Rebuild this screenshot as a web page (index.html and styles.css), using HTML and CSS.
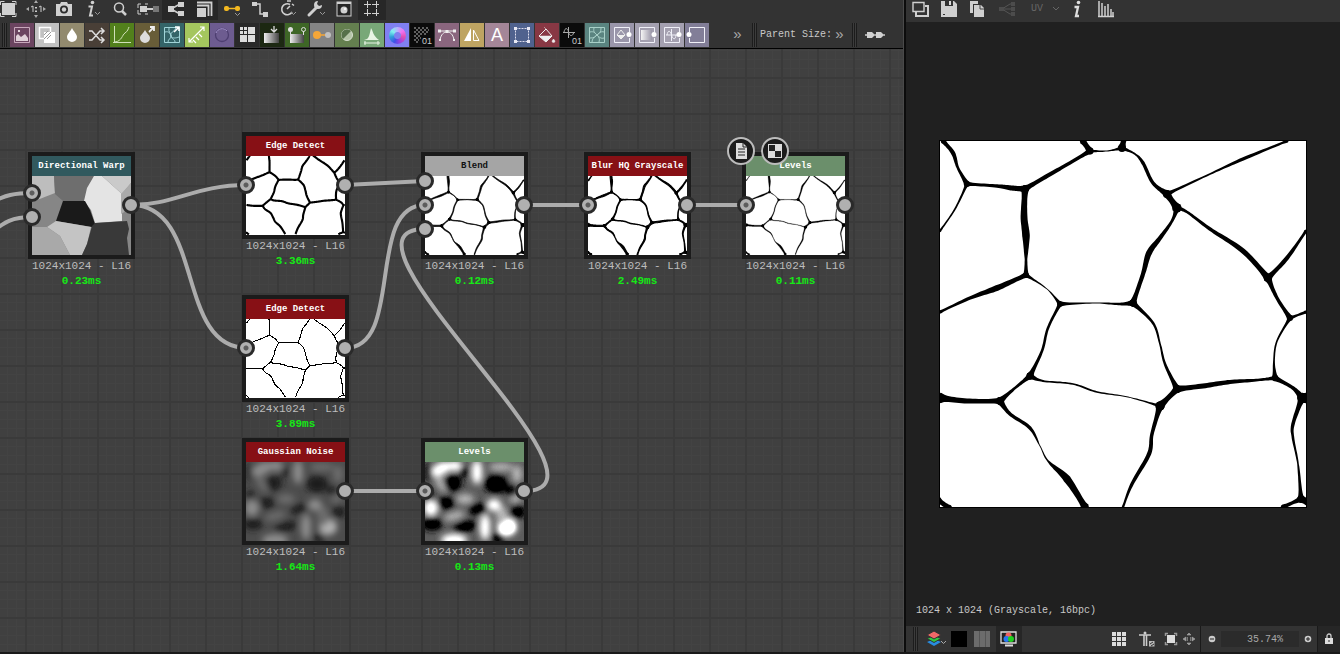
FILE: index.html
```html
<!DOCTYPE html>
<html lang="en">
<head>
<meta charset="utf-8">
<title>Graph editor</title>
<link rel="stylesheet" href="styles.css">
</head>
<body>
<svg class="defs" aria-hidden="true">
  <defs>
    <symbol id="ribbons" viewBox="0 0 366 366" overflow="visible"><g id="ribbon-group"></g></symbol>
    <symbol id="lines" viewBox="0 0 366 366" overflow="visible"><path id="line-path" fill="none"/></symbol>
    <filter id="soft" x="-20%" y="-20%" width="140%" height="140%"><feGaussianBlur stdDeviation="3"/></filter>
    <filter id="contrast" x="0" y="0" width="100%" height="100%" color-interpolation-filters="sRGB">
      <feComponentTransfer>
        <feFuncR type="linear" slope="2.9" intercept="-0.5"/><feFuncG type="linear" slope="2.9" intercept="-0.5"/><feFuncB type="linear" slope="2.9" intercept="-0.5"/>
      </feComponentTransfer>
    </filter>
    <g id="noise">
      <rect width="99" height="79" fill="#4c4c4c"/>
      <g filter="url(#soft)">
        <g fill="#8c8c8c">
          <ellipse cx="16" cy="7" rx="11" ry="6" transform="rotate(-25 16 7)"/><ellipse cx="30" cy="4" rx="7" ry="5"/>
          <ellipse cx="52" cy="10" rx="5" ry="12"/><ellipse cx="6" cy="46" rx="7" ry="8"/>
          <ellipse cx="69" cy="43" rx="7" ry="6"/><ellipse cx="29" cy="78" rx="13" ry="6"/>
          <ellipse cx="60" cy="65" rx="5" ry="13"/>
        </g>
        <ellipse cx="82" cy="65" rx="9" ry="8" fill="#b0b0b0"/>
        <g fill="#6c6c6c">
          <ellipse cx="76" cy="5" rx="12" ry="4"/><ellipse cx="16" cy="22" rx="4" ry="10" transform="rotate(-35 16 22)"/>
          <ellipse cx="40" cy="37" rx="9" ry="5"/><ellipse cx="29" cy="54" rx="11" ry="4" transform="rotate(-15 29 54)"/>
          <ellipse cx="90" cy="36" rx="6" ry="5"/><ellipse cx="92" cy="12" rx="5" ry="9"/>
          <ellipse cx="77" cy="54" rx="6" ry="10"/>
        </g>
        <g fill="#1c1c1c">
          <ellipse cx="28" cy="21" rx="8" ry="8"/><ellipse cx="71" cy="22" rx="11" ry="9"/>
          <ellipse cx="21" cy="41" rx="8" ry="6"/><ellipse cx="53" cy="47" rx="9" ry="5" transform="rotate(-15 53 47)"/>
          <ellipse cx="7" cy="62" rx="10" ry="6"/><ellipse cx="93" cy="50" rx="7" ry="6"/><ellipse cx="40" cy="65" rx="12" ry="5" transform="rotate(-15 40 65)"/>
          <ellipse cx="73" cy="76" rx="6" ry="5"/><ellipse cx="4" cy="33" rx="4" ry="5"/><ellipse cx="86" cy="29" rx="5" ry="5"/>
          <ellipse cx="39" cy="10" rx="4" ry="5"/><ellipse cx="3" cy="10" rx="3" ry="9"/>
        </g>
      </g>
    </g>
  </defs>
</svg>

<main class="app">
  <section class="editor">
    <div class="toolbar main-tools">
      <button class="tool" aria-label="Fit view"><svg viewBox="0 0 28 20"><rect x="8" y="3" width="13" height="12" fill="#d0d0d0"/><path d="M6.500 5V1.500h4M18 1.500h4V5M22 13v3.500h-4M10.500 16.500h-4V13" fill="none" stroke="#d0d0d0"/></svg></button>
      <button class="tool" aria-label="Actual size"><svg viewBox="0 0 28 20"><path d="M4 9l3-2v4zM24 9l-3-2v4zM14 0l2 3h-4zM14 18l2-3h-4z" fill="#aaa"/><path d="M9 7l2-1v6M19 12V6l-2 1" fill="none" stroke="#ccc"/><path d="M13 7h2v1.500h-2zM13 10.500h2V12h-2z" fill="#ccc"/></svg></button>
      <button class="tool" aria-label="Screenshot"><svg viewBox="0 0 28 20"><path d="M6 4h4l1-2h6l1 2h4v12H6z" fill="#d0d0d0"/><circle cx="14" cy="9.500" r="4" fill="#2b2b2b"/><circle cx="14" cy="9.500" r="2.200" fill="#d0d0d0"/></svg></button>
      <button class="tool" aria-label="Information"><svg viewBox="0 0 28 20"><circle cx="14.500" cy="2.500" r="1.800" fill="#d0d0d0"/><path d="M10.500 6.500h3.500l-2 9h3" fill="none" stroke="#d0d0d0" stroke-width="2"/><path d="M17 12l2.500 2.500L22 12" fill="none" stroke="#999"/></svg></button>
      <button class="tool" aria-label="Search"><svg viewBox="0 0 28 20"><circle cx="13" cy="7.500" r="4.500" fill="none" stroke="#d0d0d0" stroke-width="1.500"/><path d="M16 11l4 4" stroke="#d0d0d0" stroke-width="2.500"/></svg></button>
      <button class="tool" aria-label="Align nodes"><svg viewBox="0 0 28 20"><path d="M4 8V4h3M4 10v4h3M14 4h-3M14 14h-3" fill="none" stroke="#ccc"/><rect x="6" y="6" width="7" height="6" fill="#d0d0d0"/><path d="M13 9h7" stroke="#d0d0d0" stroke-width="2"/><rect x="19" y="6" width="6" height="6" fill="#777"/></svg></button>
      <button class="tool pressed" aria-label="Link mode"><svg viewBox="0 0 28 20"><path d="M9 9l9-5M9 9l9 5" stroke="#d0d0d0" stroke-width="1.500"/><path d="M6 6h6v6H6zM16 2h6v5h-6zM16 11h6v5h-6z" fill="#d0d0d0"/></svg></button>
      <button class="tool pressed" aria-label="Stacking"><svg viewBox="0 0 28 20"><path d="M7 8h9v9H7z" fill="#d0d0d0"/><path d="M7 5.500h11.500V16M7 2.500h14.500V16" fill="none" stroke="#d0d0d0" stroke-width="1.800"/></svg></button>
      <button class="tool" aria-label="Highlight links"><svg viewBox="0 0 28 20"><path d="M8 8.500h12" stroke="#f4b920" stroke-width="1.500"/><rect x="6" y="6" width="5" height="5" rx="2" fill="#f4b920"/><rect x="17" y="6" width="5" height="5" rx="2" fill="#f4b920"/><path d="M17 13l2.500 2.500L22 13" fill="none" stroke="#999"/></svg></button>
      <button class="tool" aria-label="Connector style"><svg viewBox="0 0 28 20"><path d="M8 4h6v10h6" fill="none" stroke="#d0d0d0" stroke-width="1.500"/><path d="M6 2h5v4H6zM17 12h5v5h-5z" fill="#d0d0d0"/></svg></button>
      <button class="tool" aria-label="Timing"><svg viewBox="0 0 28 20"><path d="M16 4.500a5.500 5.500 0 1 0 2 7.500" fill="none" stroke="#d0d0d0" stroke-width="1.600"/><path d="M13 1h4M13 9l3-3M18 4l2 1.500" fill="none" stroke="#d0d0d0" stroke-width="1.500"/><path d="M17 12l2.500 2.500L22 12" fill="none" stroke="#999"/></svg></button>
      <button class="tool" aria-label="Tools"><svg viewBox="0 0 28 20"><path d="M7 15l8-8" stroke="#d0d0d0" stroke-width="3" stroke-linecap="round"/><path d="M20 5a4 4 0 1 1-4-4l-1 3 2 2z" fill="#d0d0d0"/><path d="M18 12l2.500 2.500L23 12" fill="none" stroke="#999"/></svg></button>
      <button class="tool" aria-label="Preview"><svg viewBox="0 0 28 20"><rect x="7" y="2" width="14" height="14" fill="#262626" stroke="#d0d0d0"/><path d="M7 3h14" stroke="#d0d0d0" stroke-width="2"/><circle cx="14" cy="10" r="3.500" fill="#d0d0d0"/><circle cx="15" cy="9" r="1" fill="#fff"/></svg></button>
      <button class="tool pressed" aria-label="Snap to grid"><svg viewBox="0 0 28 20"><path d="M9.500 1v16M18.500 1v16M6 4.500h16M6 13.500h16" stroke="#d0d0d0" stroke-dasharray="7 1"/></svg></button>
    </div>

    <div class="toolbar node-tools">
      <span class="grip"></span>
      <div class="palette">
        <button class="swatch c0" aria-label="Bitmap"><svg viewBox="0 0 24 24"><path d="M4.500 4.500h15v15h-15z" fill="none" stroke="#c8a8bc"/><path d="M6 18v-5l2-2 3 3 4-3 3 4v3zM8 7h2v2H8z" fill="#e0d0d8"/></svg></button>
        <button class="swatch c1" aria-label="Blend"><svg viewBox="0 0 24 24"><path d="M4.500 4.500h11v11h-11z" fill="none" stroke="#fff" stroke-width="1.500"/><path d="M9 9h11v11H9z" fill="#fff"/><path d="M9 12l4-4M9 16l7-7M12 16l4-4" stroke="#999"/></svg></button>
        <button class="swatch c2" aria-label="Blur"><svg viewBox="0 0 24 24"><path d="M12 5c2 4 5 6 5 9a5 5 0 0 1-10 0c0-3 3-5 5-9z" fill="#fff"/></svg></button>
        <button class="swatch c3" aria-label="Channel shuffle"><svg viewBox="0 0 24 24"><path d="M4 8h3l8 9h3M4 17h3l8-9h3M16 5l3 3-3 3M16 14l3 3-3 3" fill="none" stroke="#ddd" stroke-width="1.500"/></svg></button>
        <button class="swatch c4" aria-label="Curve"><svg viewBox="0 0 24 24"><path d="M4.500 3v17M3 19.500h18M5 19c7-1 7-7 10-9s3-4 4-6" fill="none" stroke="#d0e0b8"/></svg></button>
        <button class="swatch c5" aria-label="Directional blur"><svg viewBox="0 0 24 24"><path d="M10 7c2 4 5 5 5 8a5 5 0 0 1-10 0c0-3 3-4 5-8z" fill="#ddd"/><path d="M14 9l5-5M15 4h4v4" fill="none" stroke="#eee" stroke-width="1.800"/></svg></button>
        <button class="swatch c6" aria-label="Directional warp"><svg viewBox="0 0 24 24"><path d="M4.500 4.500h15v15h-15zM5 9c4-1 5 1 6 4s5 2 8 1M9 5c-1 4 2 5 2 8s-3 3-3 6M16 5c-2 4-6 4-5 8s4 3 4 6" fill="none" stroke="#a0d4d8"/><path d="M14 9l5-5M15 4h4v4" fill="none" stroke="#fff" stroke-width="1.600"/></svg></button>
        <button class="swatch c7" aria-label="Distance"><svg viewBox="0 0 24 24"><path d="M4 19L19 4M15 4h4v4M4 15v4h4M11 14l3 3M14 11l3 3M8 17l3 3" fill="none" stroke="#fff" stroke-width="1.200"/></svg></button>
        <button class="swatch c8" aria-label="Emboss"><svg viewBox="0 0 24 24"><circle cx="12" cy="12" r="6.500" fill="none" stroke="#4d3e70" stroke-width="1.300"/><path d="M6 10a6.500 6.500 0 0 1 11-2" fill="none" stroke="#a898d0"/></svg></button>
        <button class="swatch c9" aria-label="FX map"><svg viewBox="0 0 24 24"><path d="M5 4h3v3H5zM9 4h3v3H9zM5 8h3v3H5zM9 8h3v3H9zM13 4h7v7h-7zM5 12h7v7H5zM13 12h7v7h-7z" fill="#ddd"/></svg></button>
        <button class="swatch c10" aria-label="Gradient"><svg viewBox="0 0 24 24"><linearGradient id="g1"><stop stop-color="#eee"/><stop offset="1" stop-color="#444"/></linearGradient><path d="M4 10h15v10H4z" fill="url(#g1)"/><path d="M14 3v5M11 6l3 3 3-3" fill="none" stroke="#ddd" stroke-width="1.300"/></svg></button>
        <button class="swatch c11" aria-label="Gradient map"><svg viewBox="0 0 24 24"><path d="M5 11h14v9H5z" fill="url(#g1)"/><path d="M5.500 8v6M18.500 8v4" stroke="#ddd"/><circle cx="5.500" cy="6.500" r="2.500" fill="#ddd"/><circle cx="18.500" cy="6.500" r="2" fill="none" stroke="#ddd"/></svg></button>
        <button class="swatch c12" aria-label="Grayscale conversion"><svg viewBox="0 0 24 24"><path d="M7 12h11" stroke="#f4a638" stroke-width="1.500"/><circle cx="7" cy="12" r="4" fill="#f4a638"/><circle cx="18" cy="12" r="3" fill="#c0c0c0"/></svg></button>
        <button class="swatch c13" aria-label="HSL"><svg viewBox="0 0 24 24"><circle cx="12" cy="12" r="5.500" fill="#b4c4a8" stroke="#d8e0d0"/><path d="M8 16L16 8a5.500 5.500 0 0 0-8 8z" fill="#56704a"/></svg></button>
        <button class="swatch c14" aria-label="Levels"><svg viewBox="0 0 24 24"><path d="M4 17c5-1 5-3 7-12 2 3 2 8 8 12z" fill="#e8f4e4"/><path d="M4 20h16M5 18v4M18 18v4" stroke="#e8f4e4"/></svg></button>
        <button class="swatch c15" aria-label="Normal"><span class="wheel"></span></button>
        <button class="swatch c16" aria-label="Pixel processor"><svg viewBox="0 0 24 24"><path d="M4 5h15M4 9h15M4 13h7M4 17h5" stroke="#606060" stroke-width="2" stroke-dasharray="2 2"/><path d="M6 7h13M6 11h11M6 15h5M6 19h3" stroke="#606060" stroke-width="2" stroke-dasharray="2 2"/></svg><span class="digits">01</span></button>
        <button class="swatch c17" aria-label="SVG"><svg viewBox="0 0 24 24"><path d="M5 8h14M5 17c1-6 4-8 7-8s6 2 7 8" fill="none" stroke="#eee"/><path d="M3 6.500h3v3H3zM18 6.500h3v3h-3zM10.500 7h3v3h-3zM4 16h2v2H4zM18 16h2v2h-2z" fill="#eee"/></svg></button>
        <button class="swatch c18" aria-label="Mirror"><svg viewBox="0 0 24 24"><path d="M11 5v13H4z" fill="#fff"/><path d="M13.500 7v10.500H19z" fill="none" stroke="#fff"/></svg></button>
        <button class="swatch c19 letter" aria-label="Text">A</button>
        <button class="swatch c20" aria-label="Transformation"><svg viewBox="0 0 24 24"><path d="M5.500 5.500h13v13h-13z" fill="none" stroke="#dde" stroke-dasharray="2 1"/><path d="M4 4h3v3H4zM17 4h3v3h-3zM4 17h3v3H4zM17 17h3v3h-3z" fill="#e8e8f4"/></svg></button>
        <button class="swatch c21" aria-label="Uniform color"><svg viewBox="0 0 24 24"><path d="M4 13l7-7 6 7-6 6z" fill="none" stroke="#eee"/><path d="M9 4l3 3M4 13h13l-6 6zM18.500 16l1.500 2a1.500 1.500 0 1 1-3 0z" fill="#eee" stroke="#eee" stroke-width=".5"/></svg></button>
        <button class="swatch c22" aria-label="Value processor"><svg viewBox="0 0 24 24"><path d="M3 9.500h12M8.500 4v11M4 9c1-5 4-4 4.500 0s4 5 5 1" fill="none" stroke="#aaa"/></svg><span class="digits">01</span></button>
        <button class="swatch c23" aria-label="Warp"><svg viewBox="0 0 24 24"><path d="M4.500 4.500h15v15h-15zM5 9c4-1 5 1 7 3s4 4 7 3M9 5c-1 4 1 5 3 7s3 4 2 7M16 5c0 4-1 5-4 7s-5 4-5 7M5 15c4 0 5-1 7-3s4-4 7-3" fill="none" stroke="#a8d0c8"/></svg></button>
        <button class="swatch c24" aria-label="Input color"><svg viewBox="0 0 24 24"><path d="M19.500 9V4.500h-15v15h15V15" fill="none" stroke="#f0f0f8"/><path d="M7 12l4-5 4 5-4 4z" fill="none" stroke="#eee"/><path d="M7 12h8l-4 4z" fill="#eee"/><circle cx="19" cy="11.500" r="2.500" fill="#fff"/></svg></button>
        <button class="swatch c25" aria-label="Input grayscale"><svg viewBox="0 0 24 24"><linearGradient id="g2"><stop stop-color="#f4f4f4"/><stop offset="1" stop-color="#9a96a8"/></linearGradient><path d="M6 7h11v10H6z" fill="url(#g2)"/><path d="M19.500 9V4.500h-15v15h15V15" fill="none" stroke="#f0f0f8"/><circle cx="19" cy="11.500" r="2.500" fill="#fff"/></svg></button>
        <button class="swatch c26" aria-label="Input value"><svg viewBox="0 0 24 24"><path d="M19.500 9V4.500h-15v15h15V15M6 12h11M11.500 6v12M7 12c1-5 3-5 4.500 0s4 5 4.500 0" fill="none" stroke="#f0f0f8"/><circle cx="19" cy="11.500" r="2.500" fill="#fff"/></svg></button>
        <button class="swatch c27" aria-label="Output"><svg viewBox="0 0 24 24"><path d="M4.500 9V4.500h15v15h-15V15" fill="none" stroke="#f0f0f8"/><circle cx="4" cy="11.500" r="2.500" fill="#fff"/></svg></button>
      </div>
      <button class="more more-nodes" aria-label="More nodes">»</button>
      <span class="grip"></span>
      <span class="size-label">Parent Size:</span>
      <button class="more" aria-label="More sizes">»</button>
      <span class="grip grip-link"></span>
      <button class="link-tool" aria-label="Link sizes"><svg viewBox="0 0 20 12"><path d="M0 6h20" stroke="#d0d0d0" stroke-width="1.500"/><path d="M2 3h5l2 2v2L7 9H2zM11 3h5l2 2v2l-2 2h-5z" fill="#d0d0d0"/></svg></button>
    </div>

    <div class="canvas">
      <svg class="wires" aria-hidden="true">
        <path d="M-10 154C5 146 15 144 32 144M-10 184C5 173 12 168 32 168M131 156C175 156 195 136 247 136M131 156C205 156 175 299 247 299M345 136L425 132M345 299C405 299 365 156 425 156M524 442C634 442 315 180 425 180M524 156H588M687 156H747M345 442H425"/>
      </svg>

      <article class="node n-warp"><div class="frame"><h2 class="teal">Directional Warp</h2>
        <svg class="thumb" viewBox="0 0 99 79"><rect width="99" height="79" fill="#868686"/><path fill="#bdbdbd" d="M0 0h22l1 17-23 9z"/><path fill="#6e6e6e" d="M22 0h40L52 25H31l-8-7z"/><path fill="#e4e4e4" d="M62 0h8l10 9 10 9v27l-27 2-4-13-7-9 3-13z"/><path fill="#cacaca" d="M70 0h29v7l-9 11z"/><path fill="#aaa" d="M99 7v25l-10 6V18z"/><path fill="#1a1a1a" d="M31 25h22l5 9 5 14-3 3-36-6z"/><path fill="#c4c4c4" d="M24 45l35 6-4 17-5 11H38L28 60l-13-9z"/><path fill="#a9a9a9" d="M0 51h15l13 9 10 19H0z"/><path fill="#393939" d="M60 50l3-3 32-2 2 8-2 9 2 17H50l5-11z"/></svg></div>
        <i class="port in source up"></i><i class="port in down"></i><i class="port out"></i><p>1024x1024 - L16</p><strong>0.23ms</strong></article>

      <article class="node n-edge-a"><div class="frame"><h2 class="red">Edge Detect</h2>
        <svg class="thumb bold-lines" viewBox="0 74 366 295"><use href="#lines" width="366" height="366"/></svg></div>
        <i class="port in source"></i><i class="port out"></i><p>1024x1024 - L16</p><strong>3.36ms</strong></article>

      <article class="node n-edge-b"><div class="frame"><h2 class="red">Edge Detect</h2>
        <svg class="thumb fine-lines" viewBox="0 74 366 295"><use href="#lines" width="366" height="366"/></svg></div>
        <i class="port in source"></i><i class="port out"></i><p>1024x1024 - L16</p><strong>3.89ms</strong></article>

      <article class="node n-blend"><div class="frame"><h2 class="gray">Blend</h2>
        <svg class="thumb blend-lines" viewBox="0 74 366 295"><use href="#ribbons" width="366" height="366"/></svg></div>
        <i class="port in high"></i><i class="port in source"></i><i class="port in low"></i><i class="port out"></i><p>1024x1024 - L16</p><strong>0.12ms</strong></article>

      <article class="node n-blur"><div class="frame"><h2 class="red">Blur HQ Grayscale</h2>
        <svg class="thumb blur-lines" viewBox="0 74 366 295"><use href="#ribbons" width="366" height="366"/></svg></div>
        <i class="port in source"></i><i class="port out"></i><p>1024x1024 - L16</p><strong>2.49ms</strong></article>

      <article class="node n-levels"><div class="frame"><h2 class="green">Levels</h2>
        <svg class="thumb level-lines" viewBox="0 74 366 295"><use href="#ribbons" width="366" height="366"/></svg></div>
        <i class="port in source"></i><i class="port out"></i>
        <span class="badge"><svg viewBox="0 0 28 28"><path d="M9 6h7l4 4v12H9z" fill="#ddd"/><path d="M16 6v4h4M11 12h7M11 15h7M11 18h7" fill="none" stroke="#222"/></svg></span>
        <span class="badge second"><svg viewBox="0 0 28 28"><path d="M7 7h14v14H7z" fill="#ddd"/><path d="M8 8h6v6H8zM14 14h6v6h-6z" fill="#222"/></svg></span>
        <p>1024x1024 - L16</p><strong>0.11ms</strong></article>

      <article class="node n-noise"><div class="frame"><h2 class="red">Gaussian Noise</h2>
        <svg class="thumb" viewBox="0 0 99 79"><use href="#noise"/></svg></div>
        <i class="port out"></i><p>1024x1024 - L16</p><strong>1.64ms</strong></article>

      <article class="node n-noise-levels"><div class="frame"><h2 class="green">Levels</h2>
        <svg class="thumb" viewBox="0 0 99 79"><g filter="url(#contrast)"><use href="#noise"/></g></svg></div>
        <i class="port in source"></i><i class="port out"></i><p>1024x1024 - L16</p><strong>0.13ms</strong></article>
    </div>
  </section>

  <section class="viewer">
    <div class="toolbar view-tools">
      <button class="tool" aria-label="Duplicate view"><svg viewBox="0 0 28 22"><path d="M7 2.500h11v9H7z" fill="none" stroke="#d0d0d0" stroke-width="1.400"/><path d="M10 12v4h12V6h-3" fill="none" stroke="#d0d0d0" stroke-width="2"/></svg></button>
      <button class="tool" aria-label="Save"><svg viewBox="0 0 28 22"><path d="M6 1h13l3 3v13H6z" fill="#d0d0d0"/><path d="M10 1h8v5h-8z" fill="#333"/><path d="M14 1h2v4h-2z" fill="#ddd"/><path d="M8 14.500h2" stroke="#333"/></svg></button>
      <button class="tool" aria-label="Copy"><svg viewBox="0 0 28 22"><path d="M6 1h8v3H9v9H6z" fill="#d0d0d0"/><path d="M10 5h7l3 3v9H10z" fill="#d0d0d0"/><path d="M16 5v4h4" stroke="#444" fill="none"/></svg></button>
      <button class="tool dim" aria-label="Share"><svg viewBox="0 0 28 22"><path d="M9 9h12M9 9l8-5h4M9 9l8 5h4" fill="none" stroke="#555"/><path d="M6 7h5v4H6zM18 2h4v4h-4zM18 7h4v4h-4zM18 12h4v4h-4z" fill="#4c4c4c"/></svg></button>
      <button class="uv">UV<svg viewBox="0 0 8 6"><path d="M1 1l3 3 3-3" fill="none" stroke="#666"/></svg></button>
      <button class="info" aria-label="Image information"><svg viewBox="0 0 16 22"><circle cx="9.500" cy="2.500" r="1.800" fill="#ddd"/><path d="M5.500 7h3.500l-2 9h3" fill="none" stroke="#ddd" stroke-width="2.300"/></svg></button>
      <button class="tool" aria-label="Histogram"><svg viewBox="0 0 28 22"><path d="M6 16.500h16M7 1v15M10 3v13M13 6v10M16 4v12M19 9v7M21 12v4" stroke="#d0d0d0" stroke-width="1.500"/></svg></button>
    </div>
    <div class="viewport">
      <svg class="preview" viewBox="0 0 366 366" role="img" aria-label="Cell pattern preview"><use href="#ribbons" width="366" height="366"/></svg>
      <p class="caption">1024 x 1024 (Grayscale, 16bpc)</p>
    </div>
    <div class="toolbar status">
      <span class="grip"></span>
      <button class="layers" aria-label="Channels"><svg viewBox="0 0 22 20"><path d="M2 13l7 4 7-4-7-3z" fill="#288ce0"/><path d="M2 9.500l7 4 7-4-7-3z" fill="#30c840" stroke="#333"/><path d="M2 6l7 4 7-4-7-4z" fill="#f06868" stroke="#333"/><path d="M16 12l2.500 2.500L21 12" fill="none" stroke="#aaa"/></svg></button>
      <button class="chip black" aria-label="Black background"></button>
      <button class="chip bars" aria-label="Channel bars"></button>
      <button class="monitor" aria-label="Color display"><svg viewBox="0 0 26 26"><path d="M5 6h15v11H5z" fill="#222" stroke="#ddd" stroke-width="1.300"/><path d="M9 19.500h8" stroke="#ddd" stroke-width="2"/><circle cx="12.500" cy="9.500" r="3" fill="#f06060"/><circle cx="10.500" cy="13" r="3" fill="#2878f0"/><circle cx="15" cy="13" r="3" fill="#20d020"/></svg></button>
      <span class="spacer"></span>
      <button class="mini" aria-label="Tiling"><svg viewBox="0 0 16 16"><path d="M1 1h4v4H1zM6 1h4v4H6zM11 1h4v4h-4zM1 6h4v4H1zM6 6h4v4H6zM11 6h4v4h-4zM1 11h4v4H1zM6 11h4v4H6zM11 11h4v4h-4z" fill="#ddd"/></svg></button>
      <button class="mini figure" aria-label="Physical size"><svg viewBox="0 0 16 16"><circle cx="6" cy="2" r="1.500" fill="#ccc"/><path d="M0 4h12M5 4v11M7.500 4v11" stroke="#ccc" stroke-width="1.600"/><path d="M10 10h5.500v5.500H10z" fill="#bbb"/><path d="M11 13l3-2M12 15l3-2" stroke="#333"/></svg></button>
      <button class="mini fit" aria-label="Fit image"><svg viewBox="0 0 16 16"><path d="M4 4h8v8H4z" fill="#ddd"/><path d="M2.500 5V2.500H5M11 2.500h2.500V5M13.500 11v2.500H11M5 13.500H2.500V11" fill="none" stroke="#999" stroke-width="1.500"/></svg></button>
      <button class="mini one" aria-label="Zoom to actual size"><svg viewBox="0 0 16 16"><path d="M2 8l3-2v4zM14 8l-3-2v4zM8 2l2 2H6zM8 14l2-2H6zM6.500 6v4M9.500 6v4" fill="#999" stroke="#aaa" stroke-width=".6"/></svg></button>
      <span class="rule"></span>
      <button class="round" aria-label="Zoom out"><svg viewBox="0 0 8 8"><circle cx="4" cy="4" r="3.300" fill="#ccc"/><path d="M2 4h4" stroke="#222"/></svg></button>
      <input class="zoom" aria-label="Zoom level" value="35.74%">
      <button class="round" aria-label="Zoom in"><svg viewBox="0 0 8 8"><circle cx="4" cy="4" r="3.300" fill="#ccc"/><path d="M2 4h4M4 2v4" stroke="#222"/></svg></button>
      <span class="rule"></span>
      <button class="lock" aria-label="Lock zoom"><svg viewBox="0 0 10 12"><path d="M3 6V3a2 2 0 0 1 4 0v3" fill="none" stroke="#ccc" stroke-width="1.300"/><path d="M1 5h8v6H1z" fill="#ddd"/><path d="M5 7v2" stroke="#333"/></svg></button>
    </div>
  </section>
</main>
<script src="cells.js"></script>
</body>
</html>
```

FILE: styles.css
```css
* { box-sizing: border-box; }
body { margin: 0; background: #333; color: #c8c8c8; font: 10px/14px "Liberation Mono", monospace; overflow: hidden; }
button { padding: 0; border: 0; background: none; color: inherit; font: inherit; display: block; flex: none; }
svg { display: block; }
p, h2 { margin: 0; }
.defs { position: absolute; width: 0; height: 0; }

.app { display: flex; height: 100vh; border-bottom: 2px solid #1a1a1a; }
.editor { flex: 1; min-width: 0; display: flex; flex-direction: column; border-right: 1px solid #4a4a4a; }
.viewer { flex: none; width: 436px; display: flex; flex-direction: column; border-left: 2px solid #0c0c0c; }
.toolbar { display: flex; align-items: center; background: #333; flex: none; }
.tool { width: 28px; height: 20px; }
.tool svg { width: 28px; height: 20px; }
.pressed { background: #272727; }
.grip { flex: none; width: 5px; height: 24px; background: repeating-linear-gradient(90deg, #1c1c1c 0 1px, #3c3c3c 1px 2px); }

.main-tools { margin-left: -6px; height: 21px; align-items: flex-start; }
.node-tools { height: 28px; padding: 2px 0 1px 2px; border-bottom: 1px solid #000; }
.palette { display: flex; gap: 1px; margin-left: 3px; }
.swatch { position: relative; width: 24px; height: 24px; overflow: hidden; }
.swatch svg { width: 24px; height: 24px; }
.digits { position: absolute; right: 2px; bottom: 1px; font: 9px/10px "Liberation Sans", sans-serif; color: #ccc; }
.letter { font: 18px/24px "Liberation Sans", sans-serif; color: #fff; text-align: center; }
.wheel { display: block; width: 17px; height: 17px; margin: 0 auto; border-radius: 50%; background: radial-gradient(circle, #8080f0 0 3px, transparent 4px), conic-gradient(#b8b0ff, #f070f0, #e050b0, #a040e0, #4050e8, #30a0d8, #80f0f0, #b8b0ff); }
.c0 { background: #6b4460; } .c1 { background: #c2c2c2; } .c2 { background: #928a6e; } .c3 { background: #493f37; }
.c4 { background: #52801c; } .c5 { background: #685d38; } .c6 { background: #346468; } .c7 { background: #a4c65e; }
.c8 { background: #6d5c90; } .c9 { background: #292929; } .c10 { background: #1c2812; } .c11 { background: #3e6626; }
.c12 { background: #848484; } .c13 { background: #647f4f; } .c14 { background: #78a878; } .c15 { background: #8080f2; }
.c16, .c22 { background: #0b0b0b; } .c17 { background: #8a667e; } .c18 { background: #bea462; } .c19 { background: #a48698; }
.c20 { background: #50628e; } .c21 { background: #883844; } .c23 { background: #5a8480; } .c24 { background: #9a96aa; }
.c25, .c26 { background: #a4a0b0; } .c27 { background: #827e98; }
.more { font: 15px/22px "Liberation Sans", sans-serif; color: #aaa; width: 9px; padding-bottom: 2px; }
.more-nodes { margin: 0 10px 0 24px; }
.size-label { margin: 0 3px; white-space: nowrap; }
.grip-link { margin-left: 8px; }
.link-tool { margin-left: 8px; }
.link-tool svg { width: 20px; height: 12px; }

.canvas {
  flex: 1; position: relative; overflow: hidden; background-color: #404040;
  background-image: linear-gradient(90deg, #3a3a3a 2px, transparent 2px), linear-gradient(#3a3a3a 2px, transparent 2px), linear-gradient(90deg, #434343 1px, transparent 1px), linear-gradient(#434343 1px, transparent 1px);
  background-size: 36px 36px, 36px 36px, 9px 9px, 9px 9px;
  background-position: 25px 28px, 25px 28px, 25px 28px, 25px 28px;
}
.wires { position: absolute; inset: 0; width: 100%; height: 100%; fill: none; stroke: #acacac; stroke-width: 4; }
.node { position: absolute; width: 107px; text-align: center; font-size: 11px; line-height: 15px; white-space: nowrap; }
.frame { border: 4px solid #1b1b1b; }
.frame h2 { height: 20px; font-size: 9px; line-height: 20px; color: #fff; }
.frame .gray { background: #a5a5a5; color: #111; }
.red { background: #871015; }
.teal { background: #31595e; }
.green { background: #6b8f6b; }
.node p { color: #bdbdbd; }
.node strong { display: block; color: #16e816; }
.thumb { width: 99px; height: 79px; background: #fff; overflow: hidden; }
.bold-lines { stroke: #000; stroke-width: 8; }
.fine-lines { stroke: #000; stroke-width: 4; shape-rendering: crispEdges; }
.blend-lines { stroke: #000; stroke-width: 3; }
.blur-lines use { stroke: #000; stroke-width: 4; filter: blur(2px); }
.level-lines { stroke: #000; stroke-width: 1; }
.port { position: absolute; top: 44px; width: 18px; height: 18px; border: 3px solid #2a2a2a; border-radius: 50%; background: #b0b0b0; }
.in { left: -5px; }
.out { right: -5px; }
.source { background: radial-gradient(circle, #5c5c5c 0 2px, #b0b0b0 3px); }
.up { top: 32px; }
.down { top: 56px; }
.high { top: 20px; }
.low { top: 68px; }
.badge { position: absolute; left: -15px; top: -15px; width: 28px; height: 28px; border: 2px solid #bcbcbc; border-radius: 50%; background: #1c1c1c; }
.badge svg { width: 28px; height: 28px; margin: -2px; }
.second { left: 19px; }
.n-warp { left: 28px; top: 103px; }
.n-edge-a { left: 242px; top: 83px; }
.n-edge-b { left: 242px; top: 246px; }
.n-blend { left: 421px; top: 103px; }
.n-blur { left: 584px; top: 103px; }
.n-levels { left: 742px; top: 103px; }
.n-noise { left: 242px; top: 389px; }
.n-noise-levels { left: 421px; top: 389px; }

.view-tools { height: 22px; gap: 1px; align-items: flex-start; }
.view-tools .tool { height: 22px; }
.view-tools .tool svg { width: 28px; height: 22px; }
.uv { display: flex; align-items: center; gap: 9px; height: 18px; margin-left: 9px; color: #666; }
.uv svg { width: 8px; height: 6px; }
.info { margin: 0 6px 0 8px; }
.info svg { width: 16px; height: 22px; }
.viewport { flex: 1; display: grid; grid-template: minmax(0, 1fr) / minmax(0, 1fr); background: #202020; }
.viewport > * { grid-area: 1 / 1; }
.preview { place-self: center; width: 85%; max-width: 368px; aspect-ratio: 1; border: 1px solid #000; background: #fff; overflow: hidden; }
.caption { align-self: end; padding: 0 10px 8px; }
.status { height: 26px; padding-left: 7px; }
.layers { margin-left: 7px; }
.layers svg { width: 22px; height: 20px; }
.chip { width: 16px; height: 16px; }
.black { background: #000; margin-left: 4px; }
.bars { margin-left: 7px; background: repeating-linear-gradient(90deg, #6c6c6c 0 5px, #555 5px 6px); }
.monitor { margin-left: 6px; background: #262626; }
.monitor svg { width: 26px; height: 26px; }
.spacer { flex: 1; }
.mini svg { width: 16px; height: 16px; }
.figure { margin-left: 12px; }
.fit { margin-left: 8px; }
.one { margin-left: 2px; }
.rule { width: 1px; height: 26px; background: #1a1a1a; margin-left: 3px; }
.round { margin: 0 5px 0 7px; }
.round svg { width: 8px; height: 8px; }
.zoom + .round { margin: 0 2px 0 5px; }
.zoom { width: 78px; height: 16px; margin: 0; padding: 0 0 0 10px; border: 0; background: #2b2b2b; color: #a8a8a8; font: inherit; text-align: center; }
.lock { width: 22px; height: 26px; background: #262626; display: grid; place-items: center; }
.lock svg { width: 10px; height: 12px; }
```

FILE: cells.js
```javascript
// Cell borders as polylines of [x, y, thickness] on a 366-unit square.
const edges = [
  [[3,0,6],[13,12,5],[18,27,3],[27,43,8]],
  [[27,43,5],[15,68,2],[0,90,3]],
  [[27,43,6],[57,45,4],[72,47,6],[85,48,9]],
  [[85,48,9],[107,35,5],[128,23,4],[150,10,8]],
  [[143,0,8],[150,10,9]],
  [[150,10,5],[167,10,1],[182,7,6]],
  [[184,-2,6],[182,7,10]],
  [[182,7,6],[195,13,2],[203,22,4],[213,42,4],[227,53,10]],
  [[227,53,7],[270,33,2],[303,18,4],[347,0,4]],
  [[227,53,10],[237,67,12]],
  [[237,67,9],[232,80,3],[220,97,5],[209,112,7],[203,133,5],[193,162,9]],
  [[237,67,6],[247,71,3],[270,88,4],[303,110,6],[328,137,11]],
  [[328,137,9],[347,117,5],[366,90,4]],
  [[328,137,10],[337,157,4],[350,177,8]],
  [[350,177,5],[366,171,4]],
  [[350,177,6],[337,200,2],[334,220,2],[335,237,8]],
  [[335,237,6],[318,239,3],[290,241,5],[263,245,6],[237,248,10]],
  [[335,237,8],[353,247,4],[362,257,11]],
  [[362,257,11],[367,257,12]],
  [[362,257,11],[353,283,4],[353,297,3],[358,323,2],[361,358,9]],
  [[361,358,9],[368,361,9]],
  [[361,358,8],[343,366,6]],
  [[193,162,9],[213,182,3],[220,203,2],[225,223,3],[237,248,10]],
  [[237,248,10],[220,265,12]],
  [[220,265,11],[212,293,4],[209,313,5],[192,343,4],[183,366,3]],
  [[220,265,5],[188,256,1],[157,251,2],[133,243,2],[103,240,2],[90,235,9]],
  [[90,235,8],[75,247,3],[60,260,10]],
  [[60,260,9],[27,260,6],[0,257,13]],
  [[60,260,10],[70,273,4],[90,287,4],[100,305,1],[108,320,2],[127,338,9],[145,366,10]],
  [[90,235,9],[102,210,3],[108,187,3],[120,163,6]],
  [[120,163,7],[155,162,1],[180,163,3],[193,162,9]],
  [[120,163,6],[107,148,1],[86,134,6]],
  [[86,134,7],[86,118,3],[86,95,9],[84,75,8],[85,48,10]],
  [[86,134,7],[57,147,7],[30,157,4],[0,171,4]],
  [[-2,359,8],[9,367,8]]
];
const FLARE = 4;
const STEPS = 12;
const THICKNESS = 0.85;

const spline = (a, b, c, d, t) =>
  0.5 * (2 * b + (c - a) * t + (2 * a - 5 * b + 4 * c - d) * t * t + (3 * b - a - 3 * c + d) * t * t * t);

function sample(edge) {
  const last = edge.length - 1;
  const base = edge.map(([x, y, w], i) => [x, y, i === 0 || i === last ? w / 2 : w]);
  const out = [];
  for (let i = 0; i < last; i++) {
    const p = [base[Math.max(i - 1, 0)], base[i], base[i + 1], base[Math.min(i + 2, last)]];
    for (let s = i ? 1 : 0; s <= STEPS; s++) {
      const t = s / STEPS;
      const x = spline(p[0][0], p[1][0], p[2][0], p[3][0], t);
      const y = spline(p[0][1], p[1][1], p[2][1], p[3][1], t);
      let w = p[1][2] + (p[2][2] - p[1][2]) * t;
      for (const end of [edge[0], edge[last]]) {
        w += end[2] / 2 * Math.exp(-Math.hypot(x - end[0], y - end[1]) / FLARE);
      }
      out.push([x, y, w * THICKNESS]);
    }
  }
  return out;
}

const toPath = points => "M" + points.map(p => p[0].toFixed(1) + " " + p[1].toFixed(1)).join("L");

function ribbon(points) {
  const left = [];
  const right = [];
  points.forEach(([x, y, w], i) => {
    const a = points[Math.max(i - 1, 0)];
    const b = points[Math.min(i + 1, points.length - 1)];
    const len = Math.hypot(b[0] - a[0], b[1] - a[1]);
    const nx = -(b[1] - a[1]) / len * w / 2;
    const ny = (b[0] - a[0]) / len * w / 2;
    left.push([x + nx, y + ny]);
    right.unshift([x - nx, y - ny]);
  });
  return toPath(left.concat(right)) + "Z";
}

function append(name, attributes) {
  const shape = document.createElementNS("http://www.w3.org/2000/svg", name);
  for (const key in attributes) shape.setAttribute(key, attributes[key]);
  document.getElementById("ribbon-group").append(shape);
}

const sampled = edges.map(sample);
for (const points of sampled) {
  append("path", { d: ribbon(points) });
  for (const [x, y, w] of [points[0], points[points.length - 1]]) {
    append("circle", { cx: x, cy: y, r: w * 0.45 });
  }
}
document.getElementById("line-path").setAttribute("d", sampled.map(toPath).join(""));
```
